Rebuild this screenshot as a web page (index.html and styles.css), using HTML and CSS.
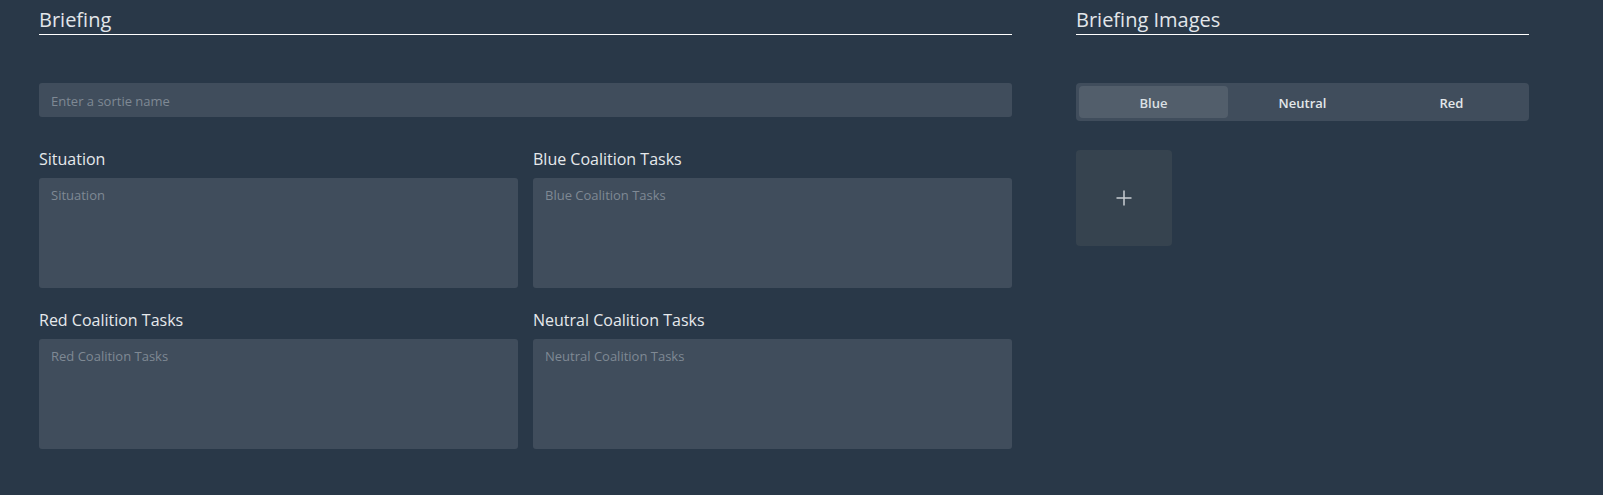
FILE: index.html
```html
<!DOCTYPE html>
<html lang="en">
<head>
<meta charset="utf-8">
<title>Briefing</title>
<link rel="stylesheet" href="styles.css">
</head>
<body>
<div class="page">
  <section class="main-col">
    <h2 class="section-title">Briefing</h2>
    <input class="field name-field" type="text" placeholder="Enter a sortie name">
    <div class="task-grid">
      <div class="task">
        <label class="task-label">Situation</label>
        <textarea class="field area" placeholder="Situation"></textarea>
      </div>
      <div class="task">
        <label class="task-label">Blue Coalition Tasks</label>
        <textarea class="field area" placeholder="Blue Coalition Tasks"></textarea>
      </div>
      <div class="task">
        <label class="task-label">Red Coalition Tasks</label>
        <textarea class="field area" placeholder="Red Coalition Tasks"></textarea>
      </div>
      <div class="task">
        <label class="task-label">Neutral Coalition Tasks</label>
        <textarea class="field area" placeholder="Neutral Coalition Tasks"></textarea>
      </div>
    </div>
  </section>
  <section class="side-col">
    <h2 class="section-title">Briefing Images</h2>
    <div class="segmented">
      <button class="seg seg-active">Blue</button>
      <button class="seg">Neutral</button>
      <button class="seg">Red</button>
    </div>
    <button class="add-image" aria-label="Add image">
      <svg width="16" height="16" viewBox="0 0 16 16"><path d="M8 0.5V15.5M0.5 8H15.5" stroke="#c9ced3" stroke-width="1.5" fill="none"/></svg>
    </button>
  </section>
</div>
</body>
</html>
```

FILE: styles.css
```css
html, body {
  margin: 0;
  padding: 0;
  background: #293848;
  height: 100%;
}

body {
  font-family: "Open Sans", "Noto Sans", sans-serif;
  color: #e4e8ec;
}

.page {
  display: flex;
  gap: 64px;
  padding: 6px 0 0 39px;
}

.main-col {
  width: 973px;
  display: flex;
  flex-direction: column;
}

.side-col {
  width: 453px;
  display: flex;
  flex-direction: column;
}

.section-title {
  margin: 0;
  font-size: 20px;
  font-weight: 400;
  line-height: 28px;
  color: #e2e6ea;
  border-bottom: 1px solid #ffffff;
}

.field {
  display: block;
  box-sizing: border-box;
  border: none;
  outline: none;
  background: #404d5c;
  border-radius: 3px;
  font-family: "Open Sans", "Noto Sans", sans-serif;
  font-size: 13px;
  color: #e4e8ec;
  margin: 0;
}

.field::placeholder {
  color: #7f8994;
  opacity: 1;
}

.name-field {
  margin-top: 48px;
  height: 34px;
  padding: 2px 12px 0;
  width: 100%;
}

.task-grid {
  display: grid;
  grid-template-columns: 1fr 1fr;
  column-gap: 15px;
  row-gap: 21px;
  margin-top: 31px;
}

.task {
  display: flex;
  flex-direction: column;
}

.task-label {
  font-size: 16px;
  line-height: 22px;
  color: #e6e9ec;
  margin-bottom: 8px;
}

.area {
  width: 100%;
  height: 110px;
  padding: 8px 12px;
  resize: none;
  line-height: 18px;
}

.segmented {
  margin-top: 48px;
  display: flex;
  padding: 3px;
  height: 38px;
  box-sizing: border-box;
  background: #404d5c;
  border-radius: 4px;
}

.seg {
  flex: 1;
  border: none;
  background: transparent;
  border-radius: 4px;
  font-family: "Open Sans", "Noto Sans", sans-serif;
  font-size: 13px;
  font-weight: 600;
  color: #e3e7ea;
  padding: 2px 0 0;
  cursor: pointer;
}

.seg-active {
  background: #525e6b;
  color: #dbe0e4;
}

.add-image {
  margin-top: 29px;
  width: 96px;
  height: 96px;
  border: none;
  border-radius: 4px;
  background: #36434f;
  display: flex;
  align-items: center;
  justify-content: center;
  padding: 0;
  cursor: pointer;
}
```
